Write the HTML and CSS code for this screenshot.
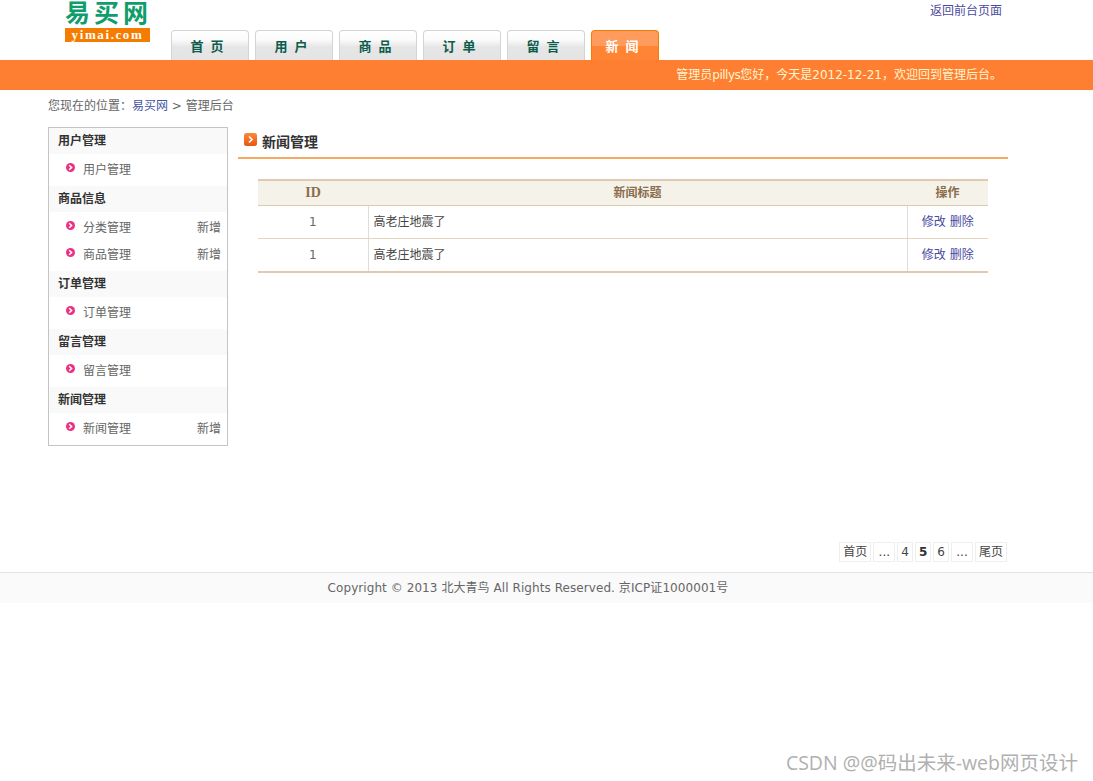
FILE: index.html
```html
<!DOCTYPE html>
<html lang="zh-CN">
<head>
  <meta charset="UTF-8">
  <title>易买网 - 管理后台</title>
  <link rel="stylesheet" href="styles.css">
</head>
<body>
  <div class="header">
    <div class="logo">
      <div class="logo-name">易买网</div>
      <div class="logo-url">yimai.com</div>
    </div>
    <ul class="nav">
      <li><a href="#">首 页</a></li>
      <li><a href="#">用 户</a></li>
      <li><a href="#">商 品</a></li>
      <li><a href="#">订 单</a></li>
      <li><a href="#">留 言</a></li>
      <li class="current"><a href="#">新 闻</a></li>
    </ul>
    <a class="help" href="#">返回前台页面</a>
  </div>
  <div class="welcome">
    <div class="welcome-text">管理员<span class="user">pillys</span>您好，今天是2012-12-21，欢迎回到管理后台。</div>
  </div>
  <div class="position">您现在的位置：<a href="#">易买网</a> &gt; 管理后台</div>
  <div class="main">
    <div class="menu">
      <h2>用户管理</h2>
      <ul>
        <li><svg class="dot" viewBox="0 0 9 9"><circle cx="4.5" cy="4.5" r="4.5" fill="#ee3080"/><path d="M3.2 2.2 5.6 4.5 3.2 6.8" fill="none" stroke="#fff" stroke-width="1.5"/></svg><a href="#">用户管理</a></li>
      </ul>
      <h2>商品信息</h2>
      <ul>
        <li><svg class="dot" viewBox="0 0 9 9"><circle cx="4.5" cy="4.5" r="4.5" fill="#ee3080"/><path d="M3.2 2.2 5.6 4.5 3.2 6.8" fill="none" stroke="#fff" stroke-width="1.5"/></svg><a href="#">分类管理</a><a class="add" href="#">新增</a></li>
        <li><svg class="dot" viewBox="0 0 9 9"><circle cx="4.5" cy="4.5" r="4.5" fill="#ee3080"/><path d="M3.2 2.2 5.6 4.5 3.2 6.8" fill="none" stroke="#fff" stroke-width="1.5"/></svg><a href="#">商品管理</a><a class="add" href="#">新增</a></li>
      </ul>
      <h2>订单管理</h2>
      <ul>
        <li><svg class="dot" viewBox="0 0 9 9"><circle cx="4.5" cy="4.5" r="4.5" fill="#ee3080"/><path d="M3.2 2.2 5.6 4.5 3.2 6.8" fill="none" stroke="#fff" stroke-width="1.5"/></svg><a href="#">订单管理</a></li>
      </ul>
      <h2>留言管理</h2>
      <ul>
        <li><svg class="dot" viewBox="0 0 9 9"><circle cx="4.5" cy="4.5" r="4.5" fill="#ee3080"/><path d="M3.2 2.2 5.6 4.5 3.2 6.8" fill="none" stroke="#fff" stroke-width="1.5"/></svg><a href="#">留言管理</a></li>
      </ul>
      <h2>新闻管理</h2>
      <ul>
        <li><svg class="dot" viewBox="0 0 9 9"><circle cx="4.5" cy="4.5" r="4.5" fill="#ee3080"/><path d="M3.2 2.2 5.6 4.5 3.2 6.8" fill="none" stroke="#fff" stroke-width="1.5"/></svg><a href="#">新闻管理</a><a class="add" href="#">新增</a></li>
      </ul>
    </div>
    <div class="content">
      <h2 class="title">
        <svg class="title-icon" viewBox="0 0 13 13"><defs><linearGradient id="orange" x1="0" y1="0" x2="0" y2="1"><stop offset="0" stop-color="#fb8a3a"/><stop offset="1" stop-color="#e8560f"/></linearGradient></defs><rect width="13" height="13" rx="2.5" fill="url(#orange)"/><path d="M5 3.5 8 6.5 5 9.5" fill="none" stroke="#fff" stroke-width="1.6"/></svg>
        新闻管理
      </h2>
      <table class="list">
        <tr>
          <th class="col-id id-head">ID</th>
          <th>新闻标题</th>
          <th class="col-op">操作</th>
        </tr>
        <tr>
          <td class="col-id">1</td>
          <td class="news-title">高老庄地震了</td>
          <td class="col-op"><a href="#">修改</a> <a href="#">删除</a></td>
        </tr>
        <tr class="last">
          <td class="col-id">1</td>
          <td class="news-title">高老庄地震了</td>
          <td class="col-op"><a href="#">修改</a> <a href="#">删除</a></td>
        </tr>
      </table>
      <div class="pager">
        <a href="#">首页</a>
        <a class="more" href="#">...</a>
        <a href="#">4</a>
        <a class="on" href="#">5</a>
        <a href="#">6</a>
        <a class="more" href="#">...</a>
        <a href="#">尾页</a>
      </div>
    </div>
  </div>
  <div class="footer">
    <div class="footer-text">Copyright © 2013 北大青鸟 All Rights Reserved. 京ICP证1000001号</div>
  </div>
  <div class="watermark">CSDN @@码出未来-web网页设计</div>
</body>
</html>
```

FILE: styles.css
```css
* {
  box-sizing: border-box;
}
body {
  margin: 0;
  font: 12px/1.5 "DejaVu Sans", "Noto Sans CJK SC", sans-serif;
  color: #666;
  background: #fff;
}
a {
  color: #666;
  text-decoration: none;
}
ul {
  list-style: none;
  margin: 0;
  padding: 0;
}

/* header */
.header {
  display: flex;
  width: 960px;
  height: 60px;
  margin-left: 48px;
  padding: 0 6px 0 17px;
}
.logo {
  width: 85px;
  margin-right: 21px;
}
.logo-name {
  height: 28px;
  font: bold 25px/28px "Liberation Serif", "Noto Sans CJK SC", sans-serif;
  letter-spacing: 4px;
  color: #0f9d6c;
  white-space: nowrap;
}
.logo-url {
  height: 14px;
  font: bold 13px/13px "Liberation Serif", serif;
  letter-spacing: 1.6px;
  text-align: center;
  color: #fff;
  background: #f57c00;
}
.nav {
  display: flex;
  gap: 6px;
  align-self: flex-end;
}
.nav a {
  display: block;
  width: 78px;
  height: 30px;
  padding-right: 5px;
  font: bold 13px/30px "Noto Sans CJK SC", sans-serif;
  letter-spacing: 1px;
  word-spacing: 2px;
  text-align: center;
  color: #0d5c4c;
  background: linear-gradient(#fff, #fbfbfb 30%, #e6e6e6 55%, #e4e4e4);
  border: 1px solid #d4d4d4;
  border-bottom: 0;
  border-radius: 4px 4px 0 0;
}
.nav .current a {
  width: 68px;
  color: #fff;
  background: linear-gradient(#ff9b5c, #ff9b5c 50%, #ff8433 50%);
  border-color: #f57c00;
}
.help {
  margin-left: auto;
  color: #4a4a9e;
  line-height: 23px;
}
.welcome {
  height: 30px;
  background: #ff7f32;
}
.welcome-text {
  width: 960px;
  margin-left: 48px;
  padding-right: 6px;
  text-align: right;
  line-height: 31px;
  color: #fff6d0;
}
.user {
  letter-spacing: -0.5px;
}
.position {
  width: 960px;
  height: 37px;
  margin-left: 48px;
  line-height: 33px;
}
.position a {
  color: #3f55a5;
}

/* menu */
.main {
  display: flex;
  gap: 10px;
  width: 960px;
  margin-left: 48px;
  align-items: flex-start;
}
.menu {
  width: 180px;
  border: 1px solid #c4c4c4;
}
.menu h2 {
  margin: 0;
  height: 26px;
  padding-left: 9px;
  font-size: 12px;
  line-height: 27px;
  color: #333;
  background: #f9f9f9;
}
.menu ul {
  padding: 2px 6px 3px 17px;
}
.menu li {
  display: flex;
  align-items: center;
  height: 27px;
}
.dot {
  width: 9px;
  height: 9px;
  margin: -5px 8px 0 0;
}
.add {
  margin-left: auto;
}

/* content */
.content {
  width: 770px;
}
.title {
  display: flex;
  align-items: center;
  gap: 5px;
  height: 32px;
  margin: 0;
  padding: 0 0 0 6px;
  font-size: 14px;
  color: #333;
  border-bottom: 2px solid #f9a95f;
}
.title-icon {
  width: 13px;
  height: 13px;
  margin-top: -5px;
}
.list {
  width: 730px;
  margin: 20px 0 0 20px;
  border-collapse: collapse;
  table-layout: fixed;
  border-top: 2px solid #dfc9b0;
  border-bottom: 2px solid #dfc9b0;
}
.list th {
  height: 25px;
  padding: 0;
  font-size: 12px;
  color: #8a6d4b;
  background: #f5f2ea;
  border-bottom: 1px solid #dfc9b0;
}
.list .id-head {
  font: bold 14px "Liberation Serif", serif;
}
.list td {
  height: 33px;
  padding: 0;
  border-bottom: 1px solid #e6d3bd;
}
.list .last td {
  height: 34px;
}
.list td + td {
  border-left: 1px solid #e0dcd8;
}
.col-id {
  width: 110px;
  text-align: center;
}
.col-op {
  width: 81px;
  text-align: center;
}
.list .news-title {
  padding-left: 5px;
  color: #444;
}
.col-op a {
  color: #4a4a9e;
}
.pager {
  display: flex;
  justify-content: flex-end;
  gap: 2px;
  margin: 269px 1px 0 0;
  height: 30px;
}
.pager a {
  height: 20px;
  padding: 0 3px;
  line-height: 19px;
  color: #444;
  border: 1px solid #eee;
}
.pager .on {
  font-weight: bold;
  color: #333;
}
.pager .more {
  width: 22px;
  text-align: center;
}

/* footer */
.footer {
  height: 31px;
  background: #fafafa;
  border-top: 1px solid #e2e2e2;
}
.footer-text {
  width: 960px;
  margin-left: 48px;
  text-align: center;
  line-height: 31px;
  letter-spacing: 0.07px;
}
.watermark {
  position: absolute;
  right: 15px;
  top: 748px;
  font: 19.5px/30px "Open Sans", "Noto Sans CJK SC", sans-serif;
  color: #b0b0b0;
}
```
